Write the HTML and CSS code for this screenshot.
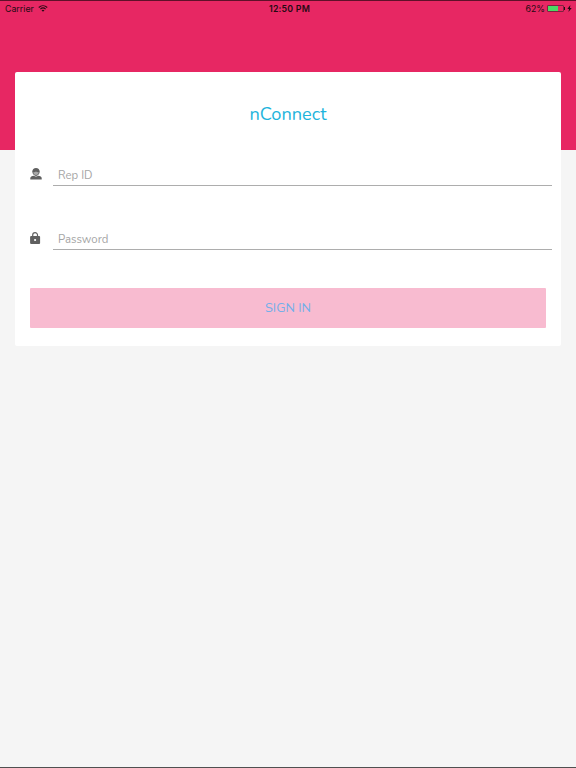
FILE: index.html
```html
<!DOCTYPE html>
<html lang="en">
  <head>
    <meta charset="UTF-8" />
    <meta name="viewport" content="width=device-width, initial-scale=1.0" />
    <title>nConnect</title>
    <link rel="stylesheet" href="styles.css">
  </head>
  <body>
    <header class="header">
      <div class="status-bar">
        <div class="carrier">
          <span>Carrier</span>
          <svg class="wifi" viewBox="0 0 20 14">
            <path d="M1.5 5C6.5 .2 13.5 .2 18.5 5M4.8 8.2c3.2-3 7.200-3 10.400 0" fill="none" stroke="#250a13" stroke-width="2.200" />
            <path d="M7 10.500c1.800-1.600 4.200-1.600 6 0l-3 3z" fill="#250a13" />
          </svg>
        </div>
        <div class="time">12:50 PM</div>
        <div class="power">
          <span>62%</span>
          <span class="battery"><span class="level"></span></span>
          <span class="battery-tip"></span>
          <svg class="bolt" viewBox="0 0 5 8">
            <path d="M3.500 0L0 4.500h2L1.300 8 5 3.300H3z" fill="#250a13" />
          </svg>
        </div>
      </div>
    </header>
    <form class="card">
      <h1 class="title">nConnect</h1>
      <div class="field">
        <svg class="icon" viewBox="0 0 12 12">
          <path d="M6 0C3.800 0 2.300 1.500 2.300 3.600 2.300 6 4 8 6 8s3.700-2 3.700-4.400C9.700 1.500 8.200 0 6 0z" />
          <path d="M.3 11.600v-1.500c0-1.400 1.500-2 3.500-2.400 1.300 1 3.100 1 4.400 0 2 .4 3.500 1 3.500 2.400v1.500z" />
          <path class="face" d="M3.200 4.200c1.300.2 2.100-.2 2.800-.7.700.5 1.500.9 2.800.7C8.700 5.800 7.500 7 6 7S3.300 5.800 3.200 4.200z" />
        </svg>
        <input type="text" class="input" placeholder="Rep ID" />
      </div>
      <div class="field">
        <svg class="icon lock" viewBox="0 0 12 12">
          <path d="M2.700 5V3.100a2.400 2.400 0 0 1 4.800 0V5" fill="none" stroke="#606060" stroke-width="1.200" />
          <rect x=".1" y="4" width="10" height="8" rx="1" />
          <circle cx="5.100" cy="8" r="1.100" fill="#fff" />
        </svg>
        <input type="password" class="input" placeholder="Password" />
      </div>
      <button type="button" class="sign-in">SIGN IN</button>
    </form>
  </body>
</html>
```

FILE: styles.css
```css
* {
  box-sizing: border-box;
}

body {
  margin: 0;
  height: 100vh;
  background-color: #f5f5f5;
  border-bottom: 1px solid #505050;
  font-family: "Nunito", "Lato", sans-serif;
  overflow: hidden;
}

.header {
  height: 150px;
  background-color: #e72763;
  border-top: 1px solid #5f1029;
}

.status-bar {
  display: grid;
  grid-template-columns: 1fr auto 1fr;
  align-items: center;
  height: 14px;
  padding: 0 4px 0 5px;
  font-family: Inter, "Liberation Sans", sans-serif;
  font-size: 8.8px;
  color: #250a13;
}

.carrier,
.power {
  display: flex;
  align-items: center;
}

.wifi {
  width: 10px;
  height: 7px;
  margin-left: 4px;
}

.time {
  padding-left: 2px;
  font-weight: 600;
  letter-spacing: 0.2px;
}

.power {
  justify-content: flex-end;
}

.battery {
  width: 17px;
  height: 7px;
  margin-left: 2px;
  border: 1px solid #7d2340;
  border-radius: 1px;
}

.level {
  display: block;
  width: 10px;
  height: 5px;
  background-color: #4cd964;
}

.battery-tip {
  width: 1px;
  height: 3px;
  background-color: #250a13;
}

.bolt {
  width: 5px;
  height: 7px;
  margin-left: 2px;
}

.card {
  height: 274px;
  margin: -78px 15px 0;
  padding: 30px 9px 0 15px;
  background-color: #fff;
  border-radius: 2px;
}

.title {
  margin: 0 6px 35px 0;
  font-size: 18.2px;
  font-weight: 400;
  line-height: 25px;
  text-align: center;
  color: #1eb4dc;
}

.field {
  display: flex;
  height: 24px;
  margin-bottom: 40px;
}

.icon {
  width: 12px;
  height: 12px;
  margin: 6px 11px 0 0;
  fill: #606060;
}

.icon .face {
  fill: #aaa;
}

.input {
  flex: 1;
  min-width: 0;
  padding: 2px 5px 0;
  border: 0;
  border-bottom: 1px solid #adadad;
  outline: 0;
  background: transparent;
  font-family: inherit;
  font-size: 11.4px;
}

.input::placeholder {
  color: #a5a5a5;
}

.sign-in {
  display: block;
  width: 516px;
  height: 40px;
  margin-top: -2px;
  padding: 0;
  border: 0;
  border-radius: 1px;
  background-color: #f8bbd0;
  color: #73afe9;
  font-family: inherit;
  font-size: 12.8px;
}
```
